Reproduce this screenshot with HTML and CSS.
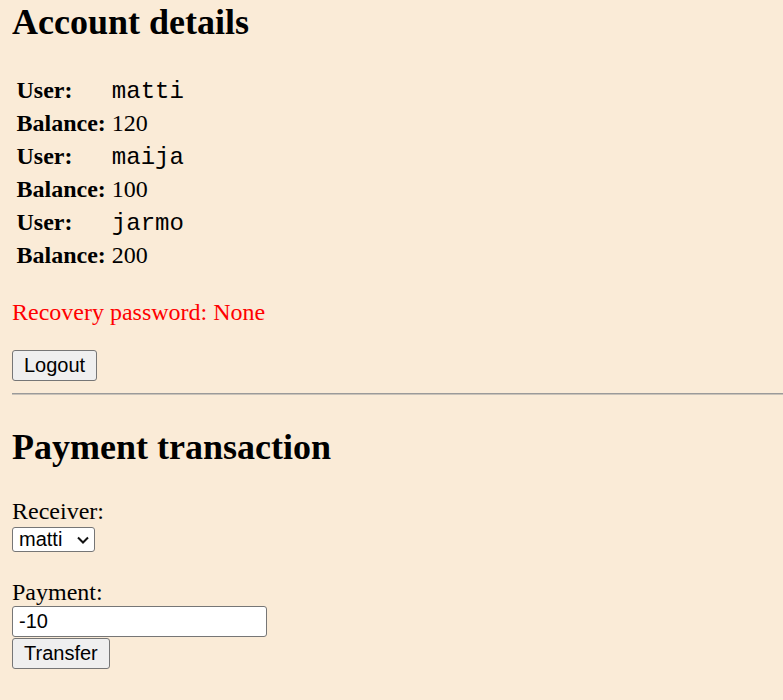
FILE: index.html
```html
<!DOCTYPE html>
<html lang="en">
<head>
<meta charset="utf-8">
<title>Bank</title>
<link rel="stylesheet" href="styles.css">
</head>
<body>
<main class="page">
  <h2 class="heading heading-first">Account details</h2>
  <table class="accounts">
    <tr><th>User:</th><td><span class="mono">matti</span></td></tr>
    <tr><th>Balance:</th><td>120</td></tr>
    <tr><th>User:</th><td><span class="mono">maija</span></td></tr>
    <tr><th>Balance:</th><td>100</td></tr>
    <tr><th>User:</th><td><span class="mono">jarmo</span></td></tr>
    <tr><th>Balance:</th><td>200</td></tr>
  </table>
  <p class="recovery">Recovery password: None</p>
  <form class="logout-form">
    <button type="button" class="btn">Logout</button>
  </form>
  <div class="divider"></div>
  <h2 class="heading heading-second">Payment transaction</h2>
  <form class="pay-form">
    <label class="field-label" for="receiver">Receiver:</label>
    <span class="select-wrap">
      <select id="receiver" class="select">
        <option>matti</option>
        <option>maija</option>
        <option>jarmo</option>
      </select>
      <svg class="chevron" width="12" height="8" viewBox="0 0 12 8" aria-hidden="true">
        <path d="M1 1.5 L6 6.5 L11 1.5" fill="none" stroke="#111" stroke-width="2"/>
      </svg>
    </span>
    <label class="field-label field-label-gap" for="amount">Payment:</label>
    <input id="amount" class="text-input" type="text" value="-10">
    <button type="button" class="btn btn-transfer">Transfer</button>
  </form>
</main>
</body>
</html>
```
FILE: styles.css
```css
html, body {
  background: #faebd7;
}
body {
  margin: 0 0 0 12px;
  font-family: "Liberation Serif", "Times New Roman", serif;
  font-size: 24px;
  color: #000;
}
.page {
  display: block;
}
.heading {
  font-size: 36px;
  font-weight: bold;
  line-height: 41px;
  margin: 28px 0 29px;
}
.heading-first {
  margin-top: 2px;
}
.heading-second {
  margin-top: 32px;
}
.accounts {
  border-spacing: 3px;
}
.accounts th,
.accounts td {
  padding: 1.5px;
  line-height: 27px;
  vertical-align: baseline;
  text-align: left;
}
.accounts th {
  font-weight: bold;
}
.mono {
  font-family: "Liberation Mono", "Courier New", monospace;
  font-size: 24px;
  line-height: 23px;
}
.recovery {
  color: #ff0000;
  line-height: 28px;
  margin: 25px 0 24px;
}
.logout-form {
  display: flex;
  margin: 0;
}
.btn {
  font-family: "Liberation Sans", Arial, sans-serif;
  font-size: 20px;
  line-height: 23px;
  color: #000;
  background: #efefef;
  border: 1px solid #767676;
  border-radius: 3px;
  padding: 3px 11px;
  height: 31px;
  box-sizing: border-box;
}
.divider {
  margin-top: 12px;
  height: 0;
  border-top: 1px solid #9a9a9a;
  border-bottom: 1px solid #c9c2b8;
}
.pay-form {
  display: flex;
  flex-direction: column;
  align-items: flex-start;
  margin: 0;
}
.field-label {
  line-height: 28px;
  margin-top: 0;
}
.field-label-gap {
  margin-top: 26px;
}
.select-wrap {
  position: relative;
  display: flex;
  margin-top: 2px;
}
.select {
  appearance: none;
  -webkit-appearance: none;
  width: 83px;
  height: 25px;
  box-sizing: border-box;
  margin: 0;
  padding: 0 0 0 6px;
  font-family: "Liberation Sans", Arial, sans-serif;
  font-size: 20px;
  line-height: 23px;
  color: #000;
  background: #fff;
  border: 1px solid #767676;
  border-radius: 3px;
}
.chevron {
  position: absolute;
  left: 65px;
  top: 9px;
  pointer-events: none;
}
.text-input {
  width: 255px;
  height: 31px;
  box-sizing: border-box;
  margin: 0;
  font-family: "Liberation Sans", Arial, sans-serif;
  font-size: 20px;
  color: #000;
  background: #fff;
  border: 1px solid #767676;
  border-radius: 3px;
  padding: 1px 6px;
}
.btn-transfer {
  margin-top: 1px;
}
```
